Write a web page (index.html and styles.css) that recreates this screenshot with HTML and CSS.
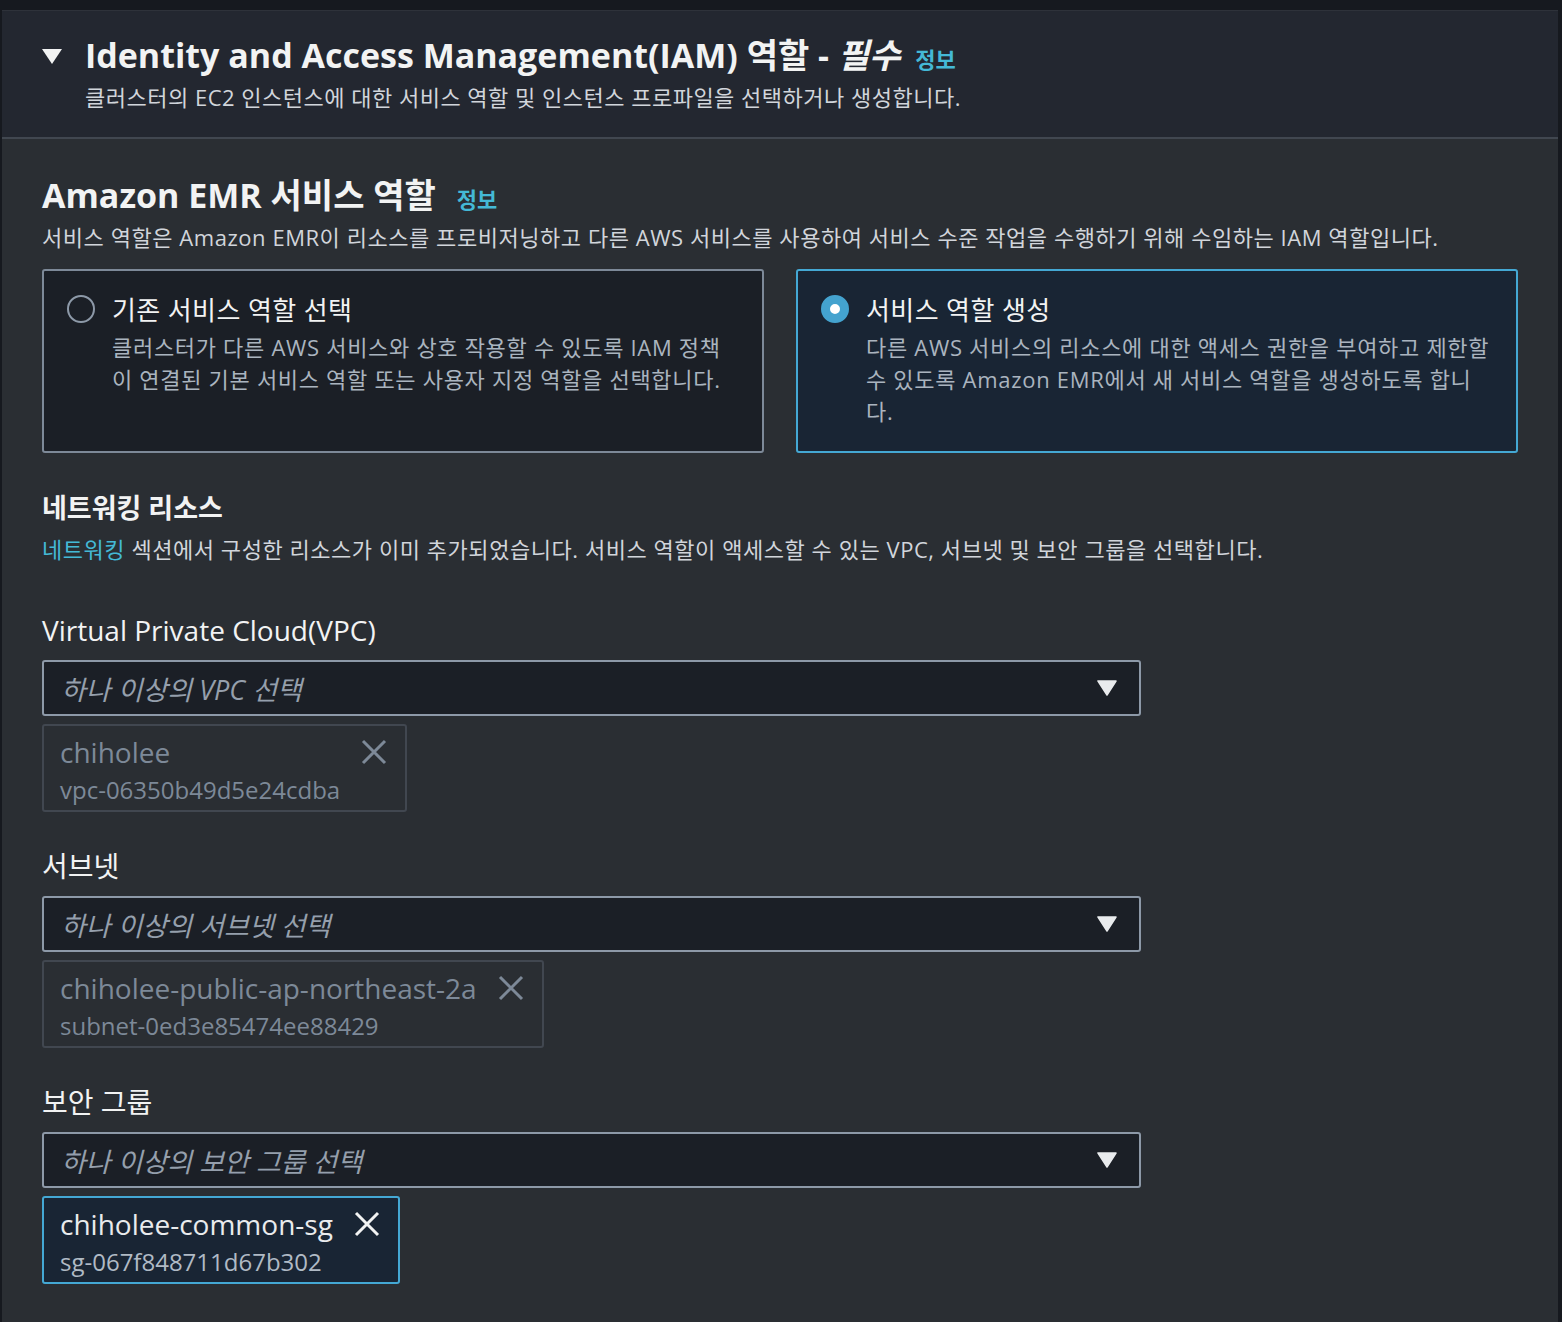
FILE: index.html
```html
<!DOCTYPE html>
<html lang="ko">
<head>
<meta charset="utf-8">
<title>IAM 역할</title>
<link rel="stylesheet" href="styles.css">
</head>
<body>
<div class="panel">
  <div class="panel-head">
    <svg class="head-caret" width="20" height="16" viewBox="0 0 20 16"><path d="M0 0 H20 L10 15 Z" fill="#f2f3f3"/></svg>
    <div class="head-text">
      <h1 class="h1">Identity and Access Management(IAM) 역할 - <i>필수</i> <span class="info info-lg">정보</span></h1>
      <p class="head-desc">클러스터의 EC2 인스턴스에 대한 서비스 역할 및 인스턴스 프로파일을 선택하거나 생성합니다.</p>
    </div>
  </div>
  <div class="panel-body">
    <h2 class="h2">Amazon EMR 서비스 역할 <span class="info">정보</span></h2>
    <p class="desc">서비스 역할은 Amazon EMR이 리소스를 프로비저닝하고 다른 AWS 서비스를 사용하여 서비스 수준 작업을 수행하기 위해 수임하는 IAM 역할입니다.</p>
    <div class="cards">
      <div class="card">
        <span class="radio"></span>
        <div class="card-text">
          <div class="card-title">기존 서비스 역할 선택</div>
          <div class="card-desc">클러스터가 다른 AWS 서비스와 상호 작용할 수 있도록 IAM 정책이 연결된 기본 서비스 역할 또는 사용자 지정 역할을 선택합니다.</div>
        </div>
      </div>
      <div class="card card-on">
        <span class="radio radio-on"></span>
        <div class="card-text">
          <div class="card-title">서비스 역할 생성</div>
          <div class="card-desc">다른 AWS 서비스의 리소스에 대한 액세스 권한을 부여하고 제한할 수 있도록 Amazon EMR에서 새 서비스 역할을 생성하도록 합니다.</div>
        </div>
      </div>
    </div>

    <h3 class="h3">네트워킹 리소스</h3>
    <p class="desc desc-net"><span class="link">네트워킹</span> 섹션에서 구성한 리소스가 이미 추가되었습니다. 서비스 역할이 액세스할 수 있는 VPC, 서브넷 및 보안 그룹을 선택합니다.</p>

    <div class="field field-first">
      <div class="label">Virtual Private Cloud(VPC)</div>
      <div class="select"><span class="ph">하나 이상의 VPC 선택</span><svg class="sel-caret" width="20" height="16" viewBox="0 0 20 16"><path d="M1 1 H19 L10 15 Z" fill="#e9ebed" stroke="#e9ebed" stroke-width="1.5" stroke-linejoin="round"/></svg></div>
      <div class="token token-off">
        <div class="token-text"><div class="token-name">chiholee</div><div class="token-id">vpc-06350b49d5e24cdba</div></div>
        <svg class="x" width="28" height="28" viewBox="0 0 28 28"><path d="M3 3 L25 25 M25 3 L3 25" stroke="currentColor" stroke-width="3"/></svg>
      </div>
    </div>

    <div class="field">
      <div class="label">서브넷</div>
      <div class="select"><span class="ph">하나 이상의 서브넷 선택</span><svg class="sel-caret" width="20" height="16" viewBox="0 0 20 16"><path d="M1 1 H19 L10 15 Z" fill="#e9ebed" stroke="#e9ebed" stroke-width="1.5" stroke-linejoin="round"/></svg></div>
      <div class="token token-off">
        <div class="token-text"><div class="token-name">chiholee-public-ap-northeast-2a</div><div class="token-id">subnet-0ed3e85474ee88429</div></div>
        <svg class="x" width="28" height="28" viewBox="0 0 28 28"><path d="M3 3 L25 25 M25 3 L3 25" stroke="currentColor" stroke-width="3"/></svg>
      </div>
    </div>

    <div class="field">
      <div class="label">보안 그룹</div>
      <div class="select"><span class="ph">하나 이상의 보안 그룹 선택</span><svg class="sel-caret" width="20" height="16" viewBox="0 0 20 16"><path d="M1 1 H19 L10 15 Z" fill="#e9ebed" stroke="#e9ebed" stroke-width="1.5" stroke-linejoin="round"/></svg></div>
      <div class="token token-on">
        <div class="token-text"><div class="token-name">chiholee-common-sg</div><div class="token-id">sg-067f848711d67b302</div></div>
        <svg class="x" width="28" height="28" viewBox="0 0 28 28"><path d="M3 3 L25 25 M25 3 L3 25" stroke="currentColor" stroke-width="3"/></svg>
      </div>
    </div>
  </div>
</div>
</body>
</html>
```
FILE: styles.css
```css
* { box-sizing: border-box; }
html, body { margin: 0; padding: 0; }
body {
  background: #16191f;
  font-family: "Open Sans", "Noto Sans CJK KR", sans-serif;
  color: #d1d5db;
  height: 1322px;
  overflow: hidden;
}
.panel {
  margin: 10px 4px 0 2px;
  background: #2a2e33;
  min-height: 1312px;
}
.panel-head {
  background: #232730;
  border-top: 1px solid #2e323a;
  border-bottom: 2px solid #414750;
  display: flex;
  align-items: flex-start;
  padding: 24px 0 0 40px;
  height: 129px;
}
.head-caret { margin-top: 14px; margin-right: 23px; flex: none; }
.h1 {
  margin: 0;
  font-size: 34px;
  font-weight: 700;
  color: #f2f3f3;
  line-height: 40px;
}
.h1 i { font-style: italic; }
.info {
  color: #44b9d6;
  font-size: 22px;
  font-weight: 700;
  margin-left: 10px;
}
.info-lg { margin-left: 6px; }
.head-desc {
  margin: 2px 0 0;
  font-size: 22px;
  line-height: 32px;
  letter-spacing: 0.5px;
  color: #d1d5db;
}
.panel-body {
  padding: 34px 0 0 40px;
}
.h2 {
  margin: 0;
  font-size: 34px;
  font-weight: 700;
  color: #f2f3f3;
  line-height: 44px;
}
.h2 .info { margin-left: 12px; }
.desc {
  margin: 0;
  font-size: 22px;
  line-height: 32px;
  letter-spacing: 0.55px;
  color: #d1d5db;
}
.cards {
  display: flex;
  gap: 32px;
  margin-top: 16px;
}
.card {
  width: 722px;
  height: 184px;
  border: 2px solid #7d8998;
  border-radius: 3px;
  background: #1b1f26;
  display: flex;
  align-items: flex-start;
  padding: 22px 0 0 23px;
}
.card-on {
  border-color: #44a8d4;
  background: #192534;
}
.radio {
  flex: none;
  width: 28px;
  height: 28px;
  border-radius: 50%;
  border: 2px solid #8d99a8;
  margin-top: 2px;
  margin-right: 17px;
}
.radio-on {
  border: 9px solid #44a3cf;
  background: #ffffff;
}
.card-text { width: 629px; }
.card-title {
  font-size: 26px;
  line-height: 34px;
  letter-spacing: 0.4px;
  color: #f2f3f3;
}
.card-desc {
  font-size: 22px;
  line-height: 32px;
  letter-spacing: 0.7px;
  color: #aab4bf;
  margin-top: 4px;
}
.h3 {
  margin: 38px 0 0;
  font-size: 27px;
  font-weight: 700;
  line-height: 34px;
  color: #f2f3f3;
}
.desc-net { margin-top: 8px; }
.link { color: #44b9d6; }
.field { margin-top: 37px; }
.field-first { margin-top: 48px; }
.label {
  font-size: 28px;
  line-height: 34px;
  color: #f2f3f3;
}
.select {
  margin-top: 13px;
  width: 1099px;
  height: 56px;
  border: 2px solid #8d99a8;
  border-radius: 3px;
  background: #1b1f26;
  display: flex;
  align-items: center;
  justify-content: space-between;
  padding: 0 22px 0 17px;
}
.ph {
  font-style: italic;
  font-size: 27px;
  color: #959fac;
}
.sel-caret { flex: none; }
.token {
  margin-top: 8px;
  display: inline-flex;
  align-items: flex-start;
  gap: 20px;
  border: 2px solid #414750;
  border-radius: 3px;
  padding: 8px 17px 4px 16px;
}
.token-off { color: #7d8998; }
.token-on {
  border-color: #44a8d4;
  background: #192534;
  color: #e9ebed;
}
.token-name { font-size: 28px; line-height: 36px; }
.token-id { font-size: 24px; line-height: 32px; margin-top: 4px; }
.token-on .token-id { color: #b0bac5; }
.x { flex: none; margin-top: 4px; }
.token-off .x { color: #7d8998; }
.token-on .x { color: #f2f3f3; }
```
